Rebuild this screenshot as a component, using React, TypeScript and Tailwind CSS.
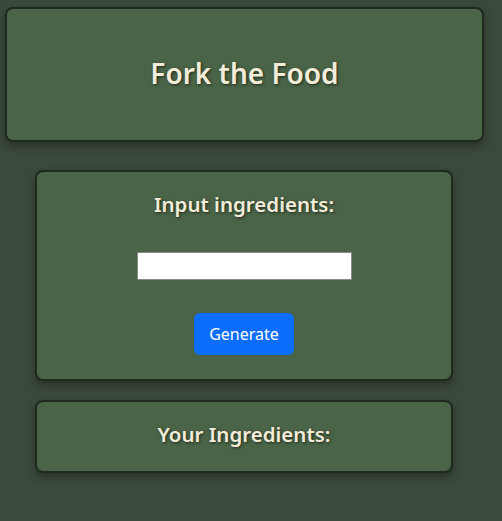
import React, { useState } from 'react';

const cardClass =
  'bg-[#4a6447] border-2 border-[#1e2a1d] rounded-lg shadow-[0_4px_10px_rgba(0,0,0,0.35)] flex flex-col items-center';

const titleClass =
  "text-[#f3ecd9] font-semibold [text-shadow:1px_1px_3px_rgba(0,0,0,0.6)]";

const App = () => {
  const [value, setValue] = useState('');

  return (
    <div
      className="min-h-[521px] bg-[#3b4a3b] pt-[7px] pb-10"
      style={{ fontFamily: '"Noto Sans", "Open Sans", sans-serif' }}
    >
      <header className={`${cardClass} ml-[5px] w-[479px] h-[135px] justify-center`}>
        <h1 className={`${titleClass} text-[28px] leading-none pb-[4px]`}>Fork the Food</h1>
      </header>

      <div className={`${cardClass} mt-[28px] ml-[35px] w-[418px] h-[211px] pt-[19px]`}>
        <h2 className={`${titleClass} text-[20.5px] leading-[26px]`}>Input ingredients:</h2>
        <input
          value={value}
          onChange={(e) => setValue(e.target.value)}
          className="mt-[35px] w-[215px] h-[28px] bg-white border border-[#8a8a8a] outline-none px-1 text-sm"
        />
        <button className="mt-[33px] bg-[#0d6efd] text-white text-[16px] rounded-md px-[15px] h-[42px] leading-none">
          Generate
        </button>
      </div>

      <div className={`${cardClass} mt-[19px] ml-[35px] w-[418px] h-[73px] justify-center`}>
        <h2 className={`${titleClass} text-[20.5px] leading-[26px] pb-[5px]`}>Your Ingredients:</h2>
      </div>
    </div>
  );
};

export default App;
